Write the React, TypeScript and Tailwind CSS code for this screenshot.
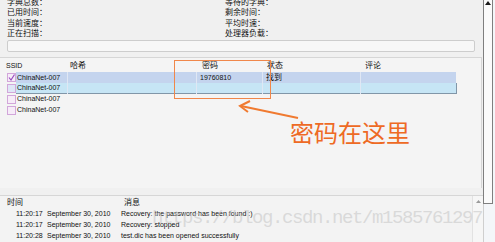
import React from "react";

const rows = [
  { ssid: "ChinaNet-007", pwd: "19760810", state: "找到", checked: true, kind: "sel" },
  { ssid: "ChinaNet-007", pwd: "", state: "", checked: false, kind: "focus" },
  { ssid: "ChinaNet-007", pwd: "", state: "", checked: false, kind: "plain" },
  { ssid: "ChinaNet-007", pwd: "", state: "", checked: false, kind: "plain" },
];

const logs = [
  ["11:20:17", "September 30, 2010", "Recovery: the password has been found :)"],
  ["11:20:17", "September 30, 2010", "Recovery: stopped"],
  ["11:20:28", "September 30, 2010", "test.dic has been opened successfully"],
];

function Check({ checked, blue }: { checked: boolean; blue?: boolean }) {
  return (
    <div
      className={`w-[9px] h-[9px] border border-[#d2a6da] flex items-center justify-center ${
        blue ? "bg-[#dfe6f6]" : "bg-[#f6ecf8]"
      }`}
    >
      {checked && (
        <svg width="7" height="7" viewBox="0 0 7 7">
          <path d="M1 3.5 L3 6 L6.5 0.5" fill="none" stroke="#9a4fc0" strokeWidth="1.2" />
        </svg>
      )}
    </div>
  );
}

export default function App() {
  return (
    <div className="relative w-[495px] h-[242px] overflow-hidden bg-[#f0f0f0] flex font-['Liberation_Sans','Noto_Sans_CJK_SC',sans-serif] text-[#111]">
      <div className="w-[483px] flex flex-col">
        {/* stats */}
        <div className="-mt-[2px] pl-[7px] grid grid-cols-[218px_1fr] text-[8px] leading-[10.3px]">
          <span>字典总数：</span>
          <span>等待的字典：</span>
          <span>已用时间：</span>
          <span>剩余时间：</span>
          <span>当前速度：</span>
          <span>平均时速：</span>
          <span>正在扫描：</span>
          <span>处理器负载：</span>
        </div>
        <div className="ml-[7px] mt-[1px] w-[468px] h-[12px] border border-[#cdcdcd] rounded-[2px] bg-[#f7f7f7]" />

        {/* results list */}
        <div className="mt-[5px] h-[132px] w-[482px] border-t border-r border-[#d6d6d6] bg-[#f4f4f4] pt-[2px]">
          <div className="grid grid-cols-[67px_129px_66px_98px_96px] h-[12px] items-center text-[8px]">
            <span className="pl-[6px] text-[7px]">SSID</span>
            <span className="pl-[3px]">哈希</span>
            <span className="pl-[6px]">密码</span>
            <span className="pl-[5px]">状态</span>
            <span className="pl-[5px]">评论</span>
          </div>
          {rows.map((r, i) => (
            <div key={i} className="flex h-[11px] items-center text-[7px]">
              <div className="w-[16px] pl-[7px] flex items-center">
                <Check checked={r.checked} blue={r.kind === "focus"} />
              </div>
              <div
                className={`grid grid-cols-[51px_129px_66px_98px_96px] h-full items-center ${
                  r.kind === "sel"
                    ? "bg-[#c4d4ee]"
                    : r.kind === "focus"
                    ? "bg-[#c6e5f5] border-r border-b border-[#8196a8]"
                    : ""
                }`}
              >
                <span className="pl-[1px] h-full flex items-center">{r.ssid}</span>
                <span className={`h-full ${r.kind !== "plain" ? "border-l border-[#dfe7f4]" : ""}`} />
                <span className={`h-full flex items-center pl-[3px] ${r.kind !== "plain" ? "border-l border-[#dfe7f4]" : ""}`}>
                  {r.pwd}
                </span>
                <span className={`h-full flex items-center pl-[3px] text-[8px] ${r.kind !== "plain" ? "border-l border-[#dfe7f4]" : ""}`}>
                  {r.state}
                </span>
                <span className={`h-full ${r.kind !== "plain" ? "border-l border-[#dfe7f4]" : ""}`} />
              </div>
            </div>
          ))}
        </div>

        {/* log */}
        <div className="mt-[7px] flex flex-1 border-t border-[#d6d6d6] bg-[#f3f3f3]">
          <div className="flex-1 flex flex-col">
            <div className="h-[13px] flex items-center text-[8px]">
              <span className="w-[124px] pl-[7px]">时间</span>
              <span>消息</span>
            </div>
            {logs.map((l, i) => (
              <div key={i} className="h-[11px] flex items-center text-[7px] whitespace-nowrap">
                <span className="w-[47px] pl-[16px]">{l[0]}</span>
                <span className="w-[74px]">{l[1]}</span>
                <span>{l[2]}</span>
              </div>
            ))}
          </div>
          <div className="w-[11px] border-l border-[#e2e2e2] bg-[#f6f6f6] flex justify-center pt-[4px]">
            <svg width="5" height="3" viewBox="0 0 5 3">
              <path d="M0 3 L2.5 0 L5 3 Z" fill="#9a9a9a" />
            </svg>
          </div>
        </div>
      </div>

      {/* right scroll bar */}
      <div className="w-[12px] flex flex-col bg-[#f4f6f9]">
        <div className="w-[10px] h-[204px] border-l border-r border-b border-[#7f7f7f] bg-[#fbfbfb] flex justify-center">
          <svg width="6" height="4" viewBox="0 0 6 4" className="mt-[1px]">
            <path d="M0 4 L3 0 L6 4 Z" fill="#1a1a1a" />
          </svg>
        </div>
        <div className="flex-1 w-[10px] border-l border-[#cfcfcf]" />
      </div>

      {/* annotation */}
      <div className="absolute left-[174px] top-[60px] w-[97px] h-[39px] border border-[#f0874a]" />
      <svg className="absolute left-0 top-0" width="495" height="242" viewBox="0 0 495 242">
        <path d="M298 118 L241 106" stroke="#f07a30" strokeWidth="2" fill="none" />
        <path d="M250 101 L240 106 L248 112" stroke="#f07a30" strokeWidth="2" fill="none" />
      </svg>
      <div className="absolute left-[290px] top-[117px] text-[24px] leading-[30px] text-[#ee6a24] font-['Noto_Sans_CJK_SC',sans-serif] whitespace-nowrap">
        密码在这里
      </div>

      {/* watermark */}
      <div className="absolute left-[152px] top-[205px] text-[19px] leading-[26px] tracking-[-1.4px] text-[#c8c8c8]/60 font-['Liberation_Mono',monospace] whitespace-nowrap">
        https://blog.csdn.net/m1585761297
      </div>
    </div>
  );
}
